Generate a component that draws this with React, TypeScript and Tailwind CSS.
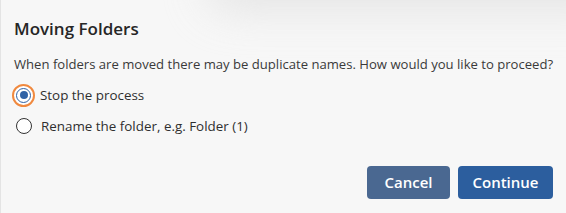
export default function App() {
  return (
    <div
      className="relative w-[566px] h-[213px] overflow-hidden bg-[#f7f7f7] border-l border-[#e4e4e4] text-[#2b2b2b]"
      style={{ fontFamily: '"Open Sans", "Liberation Sans", sans-serif' }}
    >
      <div className="pointer-events-none absolute -top-10 right-[-60px] h-[50px] w-[420px] rounded-full bg-[#dcdcdc] blur-[22px] opacity-70" />
      <div className="relative flex h-full flex-col px-[13px] pt-[17px] pb-[14px]">
        <h2 className="text-[17px] font-semibold leading-[24px] text-[#262626]">Moving Folders</h2>
        <p className="mt-[13px] whitespace-nowrap text-[13.1px] leading-[20px] text-[#3a3a3a]">
          When folders are moved there may be duplicate names. How would you like to proceed?
        </p>
        <div className="mt-[10px] flex flex-col gap-[10px]">
          <label className="flex h-[22px] items-center gap-[5px] text-[13.4px] leading-[20px] text-[#2f2f2f]">
            <span className="-ml-[2px] flex h-[23px] w-[23px] items-center justify-center rounded-full border-2 border-[#f0893f] bg-white">
              <span className="flex h-[15px] w-[15px] items-center justify-center rounded-full border-[1.5px] border-[#2f62a6] bg-white">
                <span className="h-[8px] w-[8px] rounded-full bg-[#2f62a6]" />
              </span>
            </span>
            Stop the process
          </label>
          <label className="flex h-[20px] items-center gap-[9px] text-[13.4px] leading-[20px] text-[#2f2f2f]">
            <span className="ml-[2px] h-[16px] w-[16px] rounded-full border-[1.5px] border-[#333] bg-white" />
            Rename the folder, e.g. Folder (1)
          </label>
        </div>
        <div className="mt-auto flex justify-end gap-[8px]">
          <button className="h-[33px] w-[83px] rounded-[4px] bg-[#4a6891] text-[15px] font-semibold text-white">
            Cancel
          </button>
          <button className="h-[33px] w-[95px] rounded-[4px] bg-[#2c5e9e] text-[15px] font-semibold text-white">
            Continue
          </button>
        </div>
      </div>
    </div>
  );
}
